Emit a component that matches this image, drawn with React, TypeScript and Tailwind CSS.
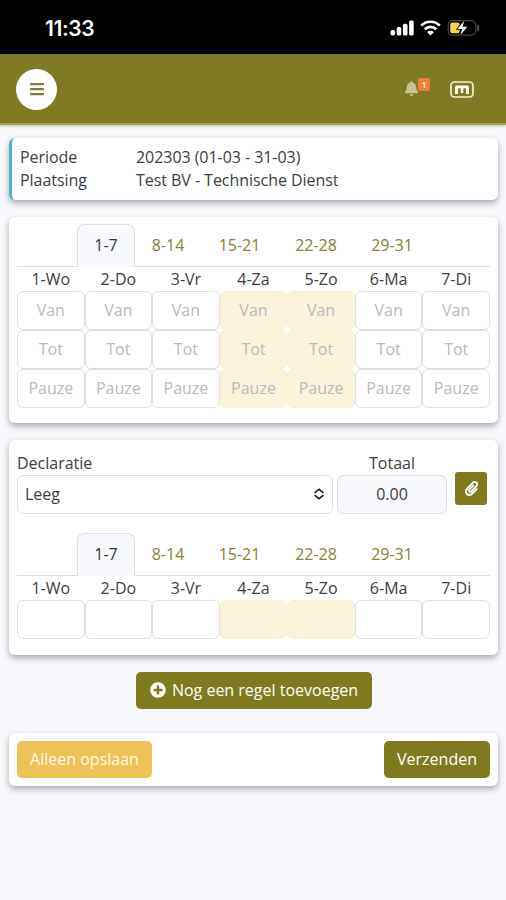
import { useState } from 'react'
import { FaBars, FaBell, FaPaperclip, FaPlusCircle } from 'react-icons/fa'

const days = ['1-Wo', '2-Do', '3-Vr', '4-Za', '5-Zo', '6-Ma', '7-Di']
const weeks = [
  { label: '1-7', width: 'w-[58px]' },
  { label: '8-14', width: 'w-[66px]' },
  { label: '15-21', width: 'w-[77px]' },
  { label: '22-28', width: 'w-[76px]' },
  { label: '29-31', width: 'w-[76px]' },
]
const card = 'rounded-[6px] bg-white shadow-[0_3px_6px_rgba(40,40,50,0.38)]'

function StatusBar() {
  return (
    <div className="flex h-[54px] items-center justify-between bg-black pl-[45px] pr-[25px] text-white">
      <span className="mt-[3px] font-['Inter'] text-[21px] font-semibold leading-none tracking-[-0.4px]">11:33</span>
      <div className="mt-[2px] flex items-center">
        <svg width="24" height="16" viewBox="0 0 24 16" fill="currentColor">
          <rect x="0.5" y="10" width="4.6" height="5.5" rx="2" />
          <rect x="6.7" y="7" width="4.6" height="8.5" rx="1.6" />
          <rect x="12.9" y="3.8" width="4.6" height="11.7" rx="1.6" />
          <rect x="19.1" y="0.4" width="4.6" height="15.1" rx="1.6" />
        </svg>
        <svg className="ml-[6px]" width="21" height="16" viewBox="0 0 21 16" fill="none" stroke="currentColor" strokeWidth="2.7">
          <path d="M1.2 5.6a13.2 13.2 0 0 1 18.6 0" />
          <path d="M4.8 9.2a8.1 8.1 0 0 1 11.4 0" />
          <path d="M10.5 15.6 7.2 12.2a4.7 4.7 0 0 1 6.6 0z" fill="currentColor" stroke="none" />
        </svg>
        <svg className="ml-[6px]" width="34" height="18" viewBox="0 0 34 18">
          <rect x="1.2" y="1.6" width="27.6" height="14.6" rx="4.4" fill="none" stroke="#474743" strokeWidth="1.2" />
          <path d="M30.2 5.5v7c1.3-.5 2.2-1.9 2.2-3.5s-.9-3-2.2-3.5z" fill="#55554f" />
          <rect x="3.2" y="3.6" width="9.5" height="10.6" rx="2.2" fill="#f7d44c" />
          <path d="M17.2 1.8 10.4 10h4.8l-1.8 6.2 6.9-8.5h-4.7z" fill="#fff" stroke="#000" strokeWidth="1.6" paintOrder="stroke" />
        </svg>
      </div>
    </div>
  )
}

function Header() {
  return (
    <header className="flex h-[71px] items-center justify-between border-b-2 border-[#aaa340] bg-[#807a24] pl-[16px] pr-[32px] shadow-[0_1px_3px_rgba(60,60,60,0.3)]">
      <button className="mt-px flex h-[41px] w-[41px] items-center justify-center rounded-full bg-white text-[#807a40]">
        <FaBars size={16} />
      </button>
      <div className="flex items-center">
        <div className="relative mr-[31px] text-[#c9c58e]">
          <FaBell size={15} />
          <span className="absolute -top-[3px] left-[14px] flex h-[13px] w-[12px] items-center justify-center rounded-[2px] bg-[#ec8137] text-[9px] font-bold leading-none text-[#fbe3cd]">
            1
          </span>
        </div>
        <svg className="mt-px" width="24" height="17" viewBox="0 0 24 17">
          <rect x="1" y="1" width="22" height="15" rx="3.5" fill="none" stroke="#f3f1cf" strokeWidth="1.7" />
          <path d="M5 13V6.500Q5 4.500 7 4.500h10q2 0 2 2V13h-3V7.200h-2.700V12h-2.600V7.200H8V13z" fill="#fffdf0" />
        </svg>
      </div>
    </header>
  )
}

function WeekTabs() {
  const [active, setActive] = useState('1-7')
  return (
    <div className="flex h-[43px] border-b border-[#dcdde2] pl-[60px]">
      {weeks.map((w) => (
        <button
          key={w.label}
          onClick={() => setActive(w.label)}
          className={`${w.width} -mb-px rounded-t-[7px] border border-b-0 pb-[2px] ${active === w.label ? 'border-[#dcdfe6] bg-[#f7f9fd] text-[#33363b]' : 'border-transparent text-[#868335]'}`}
        >
          {w.label}
        </button>
      ))}
    </div>
  )
}

function DayGrid({ rows }: { rows: string[] }) {
  return (
    <>
      <div className="grid h-[24px] grid-cols-7 text-center leading-[24px]">
        {days.map((d) => (
          <span key={d}>{d}</span>
        ))}
      </div>
      {rows.map((row) => (
        <div key={row} className="grid h-[39px] grid-cols-7">
          {days.map((d, i) => (
            <input
              key={d}
              placeholder={row}
              className={`h-[39px] w-full min-w-0 rounded-[6px] border pb-[2px] text-center outline-none placeholder:text-[#b8babd] ${i === 3 || i === 4 ? 'border-[#fbf0d3] bg-[#fbf2da]' : 'border-[#dedfe2] bg-white'}`}
            />
          ))}
        </div>
      ))}
    </>
  )
}

export default function App() {
  return (
    <div className="min-h-[900px] w-full bg-[#f7f8fc] font-['Open_Sans',sans-serif] text-[16px] text-[#3c3e42]">
      <StatusBar />
      <Header />
      <main className="pl-[9px] pr-[8px] pt-[13px]">
        <section className={`${card} grid h-[62px] grid-cols-[116px_1fr] content-center border-l-[3px] border-[#4bb4c6] pl-[8px] leading-[23px] tracking-[-0.05px]`}>
          <span>Periode</span>
          <span>202303 (01-03 - 31-03)</span>
          <span>Plaatsing</span>
          <span>Test BV - Technische Dienst</span>
        </section>

        <section className={`${card} mt-[17px] h-[206px] px-[8px] pt-[7px]`}>
          <WeekTabs />
          <DayGrid rows={['Van', 'Tot', 'Pauze']} />
        </section>

        <section className={`${card} mt-[17px] h-[215px] px-[8px] pt-[11px]`}>
          <div className="flex items-start">
            <div className="w-[316px]">
              <div className="h-[24px] leading-[24px]">Declaratie</div>
              <button className="flex h-[39px] w-full items-center justify-between rounded-[6px] border border-[#dedfe2] pb-px pl-[7px] pr-[7px]">
                Leeg
                <svg width="12" height="12" viewBox="0 0 12 12" fill="none" stroke="#222" strokeWidth="1.7">
                  <path d="M1.5 4.9 6 1.3l4.5 3.6M1.5 7.1 6 10.7l4.5-3.6" />
                </svg>
              </button>
            </div>
            <div className="ml-[4px] w-[110px] text-center">
              <div className="h-[24px] leading-[24px]">Totaal</div>
              <div className="h-[39px] rounded-[6px] border border-[#dedfe6] bg-[#f7f9fd] leading-[37px]">0.00</div>
            </div>
            <button className="ml-[8px] mt-[21px] flex h-[33px] w-[32px] items-center justify-center rounded-[3px] bg-[#807a1e] pb-px text-white">
              <FaPaperclip size={15} />
            </button>
          </div>
          <div className="mt-[19px]">
            <WeekTabs />
            <DayGrid rows={['']} />
          </div>
        </section>

        <button className="mx-auto mt-[17px] flex h-[37px] w-[236px] items-center justify-center gap-[6px] rounded-[5px] bg-[#807a1e] pb-px pl-px text-white">
          <FaPlusCircle size={16} />
          Nog een regel toevoegen
        </button>

        <section className={`${card} mt-[24px] flex h-[53px] items-center justify-between px-[8px] text-white`}>
          <button className="h-[37px] w-[135px] rounded-[5px] bg-[#edc257] pb-px text-[#fff9e8]">Alleen opslaan</button>
          <button className="h-[37px] w-[106px] rounded-[5px] bg-[#807a1e] pb-px">Verzenden</button>
        </section>
      </main>
    </div>
  )
}
